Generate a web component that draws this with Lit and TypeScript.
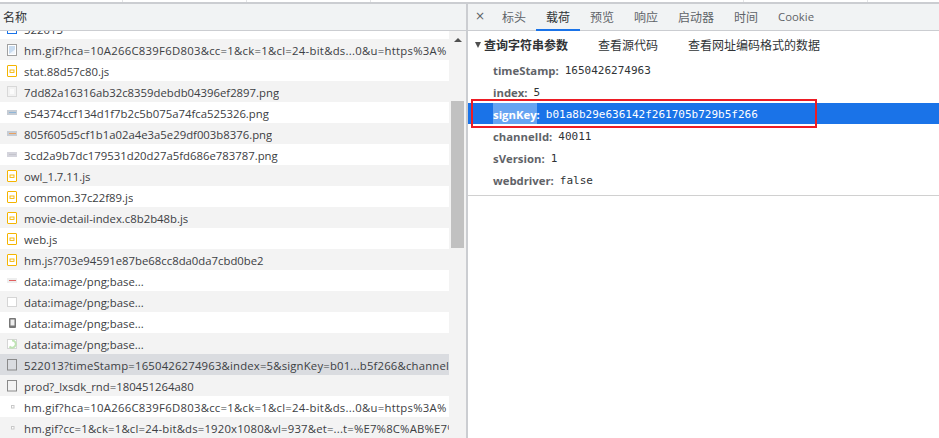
import { LitElement, html, css, svg } from "lit";
import { customElement } from "lit/decorators.js";

const js = svg`<rect x="0.5" y="0.5" width="9" height="11" rx="0.5" fill="#fff" stroke="#f4b400"/><rect x="3" y="5" width="4" height="2.4" fill="#fff" stroke="#f4b400" stroke-width="0.9"/>`;
const doc = svg`<rect x="0.5" y="0.5" width="9" height="10.5" fill="none" stroke="#8a8a8a"/>`;
const blank = svg`<rect x="0.5" y="1.5" width="9" height="9" fill="#fff" stroke="#d5d5d5"/>`;
const gif = svg`<rect x="0.5" y="0.5" width="9" height="11" fill="#fff" stroke="#a0a0a0"/><rect x="2" y="2" width="6" height="8" fill="#c9dcf0"/><path d="M2 10 L8 5.5 V10Z" fill="#f0f5fb"/>`;
const imgGrey = svg`<rect x="0.5" y="0.5" width="9" height="10" fill="#f2f2f2" stroke="#d8d8d8"/><rect x="3" y="3" width="4" height="5" fill="#fbfbfb"/>`;
const thumb = (c: string, d: string) => svg`<rect x="0" y="3" width="10" height="5" fill="${c}"/><rect x="2" y="5" width="7" height="1" fill="${d}"/>`;
const phone = svg`<rect x="2" y="1" width="7" height="10" rx="1" fill="#777"/><rect x="3.5" y="2.5" width="4" height="6" fill="#eee"/>`;
const green = svg`<rect x="0.5" y="1.5" width="9" height="9" fill="#fff" stroke="#d5d5d5"/><path d="M5 2.5 A3.6 3.6 0 1 1 2.5 8.5" fill="none" stroke="#bfe3b4" stroke-width="2"/>`;
const dot = svg`<rect x="4.5" y="4.5" width="2.5" height="2.5" fill="#fff" stroke="#c8c8c8"/>`;
const blue = svg`<rect x="0.5" y="0.5" width="9" height="10" fill="#fff" stroke="#1a73e8"/>`;

const rows: [unknown, string][] = [
  [gif, "hm.gif?hca=10A266C839F6D803&cc=1&ck=1&cl=24-bit&ds...0&u=https%3A%"],
  [js, "stat.88d57c80.js"],
  [imgGrey, "7dd82a16316ab32c8359debdb04396ef2897.png"],
  [thumb("#c6ccd4", "#8fb6d8"), "e54374ccf134d1f7b2c5b075a74fca525326.png"],
  [thumb("#c6ccd4", "#e8a060"), "805f605d5cf1b1a02a4e3a5e29df003b8376.png"],
  [thumb("#d4d4dc", "#c4c4cc"), "3cd2a9b7dc179531d20d27a5fd686e783787.png"],
  [js, "owl_1.7.11.js"],
  [js, "common.37c22f89.js"],
  [js, "movie-detail-index.c8b2b48b.js"],
  [js, "web.js"],
  [js, "hm.js?703e94591e87be68cc8da0da7cbd0be2"],
  [thumb("#eee", "#e06060"), "data:image/png;base..."],
  [blank, "data:image/png;base..."],
  [phone, "data:image/png;base..."],
  [green, "data:image/png;base..."],
  [doc, "522013?timeStamp=1650426274963&index=5&signKey=b01...b5f266&channelId=40011&sVersion=1"],
  [doc, "prod?_lxsdk_rnd=180451264a80"],
  [dot, "hm.gif?hca=10A266C839F6D803&cc=1&ck=1&cl=24-bit&ds...0&u=https%3A%"],
  [dot, "hm.gif?cc=1&ck=1&cl=24-bit&ds=1920x1080&vl=937&et=...t=%E7%8C%AB%E7%9C%BC"],
];

const tabs = ["标头", "载荷", "预览", "响应", "启动器", "时间", "Cookie"];
const params: [string, string][] = [
  ["timeStamp", "1650426274963"],
  ["index", "5"],
  ["signKey", "b01a8b29e636142f261705b729b5f266"],
  ["channelId", "40011"],
  ["sVersion", "1"],
  ["webdriver", "false"],
];

const spacing = (t: string) => (t.includes("&u=") ? "amp" : t.includes("&") ? "amp2" : "");

@customElement("app-root")
export class AppRoot extends LitElement {
  static styles = css`
    :host {
      display: block;
      position: relative;
      width: 939px;
      height: 438px;
      overflow: hidden;
      background: #fff;
      font-family: "Open Sans", "Noto Sans CJK SC", sans-serif;
      font-size: 11.33px;
      color: #3c4043;
    }
    .top {
      height: 2px;
      display: grid;
      grid-template-columns: 122px 1px 123px 1px 123px 1px 372px 1px 123px 1px 1fr;
      border-bottom: 2px solid #cbcdd1;
    }
    .top i { background: #e4e5e7; }
    .main { display: flex; height: 434px; }
    .left { width: 466px; flex: none; display: flex; flex-direction: column; }
    .divider { width: 2px; flex: none; background: #cbcdd1; }
    .right { flex: 1; min-width: 0; display: flex; flex-direction: column; }
    .head {
      height: 26px;
      flex: none;
      background: #f1f3f4;
      border-bottom: 1px solid #cbcdd1;
      display: flex;
      align-items: center;
      padding-left: 3px;
      font-size: 12px;
      color: #303336;
    }
    .body { flex: 1; display: flex; min-height: 0; }
    .list { width: 449px; flex: none; overflow: hidden; }
    .row {
      height: 21px;
      box-sizing: border-box;
      padding: 2px 0 0 7px;
      display: flex;
      align-items: center;
      gap: 7px;
      white-space: nowrap;
      overflow: hidden;
    }
    .row svg { flex: none; width: 10px; height: 12px; margin-top: -1px; }
    .row span { overflow: hidden; }
    .row.amp span { letter-spacing: 0.27px; }
    .row.amp2 span { letter-spacing: 0.18px; }
    .row.stripe { background: #f3f3f3; }
    .row.sel { background: #dadce0; }
    .row.partial { margin-top: -13px; }
    .scroll { flex: 1; display: flex; flex-direction: column; align-items: center; background: #f3f3f3; }
    .arrow {
      width: 0;
      height: 0;
      margin-top: 7px;
      border-left: 4px solid transparent;
      border-right: 4px solid transparent;
      border-bottom: 4px solid #505050;
    }
    .thumbbar { width: 13px; height: 147px; margin-top: 59px; background: #c1c1c1; }
    .tabs {
      height: 26px;
      flex: none;
      background: #f1f3f4;
      border-bottom: 1px solid #cbcdd1;
      display: flex;
      align-items: stretch;
    }
    .close { width: 24px; text-align: center; line-height: 25px; font-size: 12px; color: #5f6368; font-family: "DejaVu Sans", sans-serif; }
    .tab { padding: 0 10px; display: flex; align-items: center; color: #5f6368; font-size: 12px; border-bottom: 2px solid transparent; margin-bottom: -1px; }
    .tab.cookie { font-size: 11.33px; }
    .tab.on { color: #303336; border-bottom-color: #1a73e8; }
    .section { display: flex; align-items: center; height: 24px; margin-top: 2px; padding-left: 7px; color: #303336; font-size: 12px; }
    .section b { font-weight: 700; margin-left: 3px; width: 114px; flex: none; }
    .tri { width: 0; height: 0; border-left: 3.5px solid transparent; border-right: 3.5px solid transparent; border-top: 6px solid #505050; }
    .section span:nth-of-type(2) { margin-left: 30px; }
    .params { border-bottom: 1px solid #d0d0d0; padding-bottom: 4px; margin-top: 2px; }
    .param {
      height: 21px;
      margin-bottom: 1px;
      display: flex;
      align-items: center;
      padding-left: 25px;
      white-space: nowrap;
    }
    .param span { padding-top: 2px; }
    .param .k { font-weight: 700; color: #5f6368; }
    .param .c { font-weight: 700; color: #5f6368; }
    .param .v { margin-left: 6px; font-family: "DejaVu Sans Mono", monospace; font-size: 11px; color: #303336; }
    .param.hi { background: #1a73e8; }
    .param.hi .k { color: #fff; background: #66a4f2; height: 100%; box-sizing: border-box; display: flex; align-items: center; }
    .param.hi .c, .param.hi .v { color: #fff; }
    .mark {
      position: absolute;
      left: 471px;
      top: 99px;
      width: 346px;
      height: 29px;
      box-sizing: border-box;
      border: 2px solid #ed1c24;
    }
  `;

  render() {
    return html`
      <div class="top">
        <span></span><i></i><span></span><i></i><span></span><i></i><span></span><i></i><span></span><i></i><span></span>
      </div>
      <div class="main">
        <div class="left">
          <div class="head">名称</div>
          <div class="body">
            <div class="list">
              <div class="row partial"><svg viewBox="0 0 10 12">${blue}</svg><span>522013</span></div>
              ${rows.map(([ic, t], i) => html`<div class="row ${i === 15 ? "sel" : i % 2 === 0 ? "stripe" : ""} ${spacing(t)}">
                <svg viewBox="0 0 10 12">${ic}</svg><span>${t}</span>
              </div>`)}
            </div>
            <div class="scroll"><div class="arrow"></div><div class="thumbbar"></div></div>
          </div>
        </div>
        <div class="divider"></div>
        <div class="right">
          <div class="tabs">
            <div class="close">×</div>
            ${tabs.map((t) => html`<div class="tab ${t === "载荷" ? "on" : ""} ${t === "Cookie" ? "cookie" : ""}">${t}</div>`)}
          </div>
          <div class="section"><div class="tri"></div><b>查询字符串参数</b><span>查看源代码</span><span>查看网址编码格式的数据</span></div>
          <div class="params">
            ${params.map(([k, v]) => html`<div class="param ${k === "signKey" ? "hi" : ""}"><span class="k">${k}</span><span class="c">:</span><span class="v">${v}</span></div>`)}
          </div>
        </div>
      </div>
      <div class="mark"></div>
    `;
  }
}
